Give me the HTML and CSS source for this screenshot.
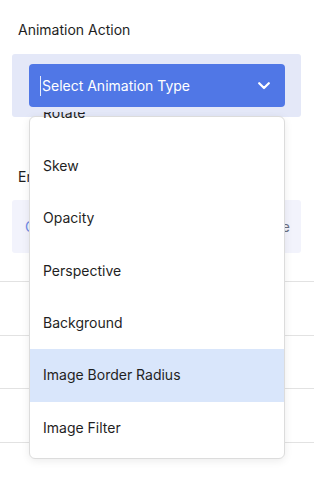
FILE: index.html
```html
<!DOCTYPE html>
<html>
<head>
<meta charset="utf-8">
<link rel="stylesheet" href="styles.css">
</head>
<body>
<div class="panel">
  <div class="field">
    <div class="label">Animation Action</div>
    <div class="select-wrap">
      <div class="select">
        <span class="value"><span class="caret"></span>Select Animation Type</span>
        <svg class="chev" width="12" height="8" viewBox="0 0 12 8"><polyline points="1.2,1.2 6,6 10.8,1.2" fill="none" stroke="#fff" stroke-width="2.2" stroke-linecap="round" stroke-linejoin="round"/></svg>
      </div>
      <div class="menu">
        <ul class="list">
          <li class="item">Rotate</li>
          <li class="item">Skew</li>
          <li class="item">Opacity</li>
          <li class="item">Perspective</li>
          <li class="item">Background</li>
          <li class="item active">Image Border Radius</li>
          <li class="item">Image Filter</li>
        </ul>
      </div>
    </div>
  </div>
  <div class="field second">
    <div class="label">Entrance Animation</div>
    <div class="seg">
      <span class="seg-left">Click</span>
      <span class="seg-right">Once</span>
    </div>
  </div>
</div>
<div class="rows">
  <div class="row"></div>
  <div class="row"></div>
  <div class="row"></div>
</div>
</body>
</html>
```

FILE: styles.css
```css
html, body {
  margin: 0;
  padding: 0;
  background: #fff;
}
body {
  font-family: "Inter", "Liberation Sans", sans-serif;
  font-size: 14px;
  color: #1f1f1f;
  width: 314px;
  height: 498px;
  overflow: hidden;
}
.panel {
  padding: 20px 13px 0 12px;
}
.label {
  line-height: 20px;
  padding-left: 6px;
  font-size: 14px;
  color: #1e1e1e;
}
.select-wrap {
  position: relative;
  margin-top: 14px;
  height: 63px;
  box-sizing: border-box;
  padding: 10px 16px 10px 17px;
  background: #e4e8f8;
  border-radius: 3px;
}
.select {
  height: 43px;
  background: #5077e6;
  border-radius: 4px;
  display: flex;
  align-items: center;
  justify-content: space-between;
  padding: 0 15px 0 11px;
  color: #fff;
}
.value {
  display: flex;
  align-items: center;
  line-height: 20px;
}
.caret {
  display: inline-block;
  width: 1px;
  height: 20px;
  background: rgba(255,255,255,0.85);
  margin-right: 1px;
}
.chev {
  display: block;
}
.menu {
  position: absolute;
  top: 62px;
  left: 17px;
  width: 256px;
  height: 343px;
  box-sizing: border-box;
  background: #fff;
  border: 1px solid #dcdcdc;
  border-radius: 6px;
  box-shadow: 0 2px 8px rgba(0,0,0,0.08);
  clip-path: inset(-4px -14px -14px -14px);
  z-index: 5;
}
.list {
  list-style: none;
  margin: -29.6px 0 0 0;
  padding: 0;
}
.item {
  height: 52.4px;
  line-height: 52.4px;
  padding-left: 13px;
  color: #1f1f1f;
}
.item.active {
  background: #d9e6fb;
}
.second {
  margin-top: 50px;
}
.seg {
  margin-top: 13px;
  height: 53px;
  background: #f2f3fc;
  border-radius: 3px;
  display: flex;
  align-items: center;
  justify-content: space-between;
  padding: 0 11px 0 13px;
}
.seg-left {
  color: #6e8ae6;
}
.seg-right {
  color: #6c7080;
}
.rows {
  margin-top: 28px;
  border-top: 1px solid #e2e2e2;
}
.row {
  height: 52.5px;
  border-bottom: 1px solid #e2e2e2;
}
```
